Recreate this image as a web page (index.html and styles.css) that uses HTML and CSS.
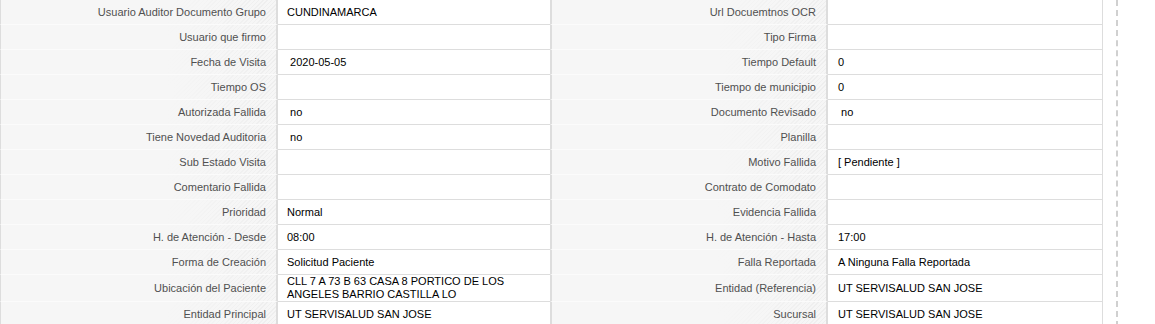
FILE: index.html
```html
<!DOCTYPE html>
<html lang="es">
  <head>
    <meta charset="utf-8" />
    <meta name="viewport" content="width=device-width, initial-scale=1.0" />
    <title>Detalle de Visita</title>
    <link rel="stylesheet" href="styles.css">
  </head>
  <body>
    <div class="page">
      <div class="visit-detail">
        <div class="lbl first">Usuario Auditor Documento Grupo</div>
        <div class="val">CUNDINAMARCA</div>
        <div class="lbl">Url Docuemtnos OCR</div>
        <div class="val last"></div>

        <div class="lbl first">Usuario que firmo</div>
        <div class="val"></div>
        <div class="lbl">Tipo Firma</div>
        <div class="val last"></div>

        <div class="lbl first">Fecha de Visita</div>
        <div class="val">&nbsp;2020-05-05</div>
        <div class="lbl">Tiempo Default</div>
        <div class="val last">0</div>

        <div class="lbl first">Tiempo OS</div>
        <div class="val"></div>
        <div class="lbl">Tiempo de municipio</div>
        <div class="val last">0</div>

        <div class="lbl first">Autorizada Fallida</div>
        <div class="val">&nbsp;no</div>
        <div class="lbl">Documento Revisado</div>
        <div class="val last">&nbsp;no</div>

        <div class="lbl first">Tiene Novedad Auditoria</div>
        <div class="val">&nbsp;no</div>
        <div class="lbl">Planilla</div>
        <div class="val last"></div>

        <div class="lbl first">Sub Estado Visita</div>
        <div class="val"></div>
        <div class="lbl">Motivo Fallida</div>
        <div class="val last">[ Pendiente ]</div>

        <div class="lbl first">Comentario Fallida</div>
        <div class="val"></div>
        <div class="lbl">Contrato de Comodato</div>
        <div class="val last"></div>

        <div class="lbl first">Prioridad</div>
        <div class="val">Normal</div>
        <div class="lbl">Evidencia Fallida</div>
        <div class="val last"></div>

        <div class="lbl first">H. de Atención - Desde</div>
        <div class="val">08:00</div>
        <div class="lbl">H. de Atención - Hasta</div>
        <div class="val last">17:00</div>

        <div class="lbl first">Forma de Creación</div>
        <div class="val">Solicitud Paciente</div>
        <div class="lbl">Falla Reportada</div>
        <div class="val last">A Ninguna Falla Reportada</div>

        <div class="lbl first">Ubicación del Paciente</div>
        <div class="val">CLL 7 A 73 B 63 CASA 8 PORTICO DE LOS ANGELES BARRIO CASTILLA LO</div>
        <div class="lbl">Entidad (Referencia)</div>
        <div class="val last">UT SERVISALUD SAN JOSE</div>

        <div class="lbl first">Entidad Principal</div>
        <div class="val">UT SERVISALUD SAN JOSE</div>
        <div class="lbl">Sucursal</div>
        <div class="val last">UT SERVISALUD SAN JOSE</div>
      </div>
      <div class="side-panel"></div>
    </div>
  </body>
</html>
```

FILE: styles.css
```css
body {
  margin: 0;
  background-color: white;
  font-family: "Liberation Sans", Arial, sans-serif;
  font-size: 11px;
}
.page {
  display: flex;
  align-items: stretch;
  min-height: 324px;
}
.visit-detail {
  display: grid;
  grid-template-columns: 278px 272px 278px 275px;
  align-content: start;
}
.lbl,
.val {
  display: flex;
  align-items: center;
  min-height: 24px;
  line-height: 13px;
}
.lbl {
  justify-content: flex-end;
  text-align: right;
  padding: 0 10px 0 6px;
  color: #505050;
  border-left: 2px solid #dddddd;
  border-right: 2px solid #dddddd;
  border-bottom: 1px solid #fbfbfb;
  background:
    linear-gradient(to right, #f6f6f6 60%, rgba(246, 246, 246, 0) 100%),
    repeating-linear-gradient(135deg, #f6f6f6 0 2px, #eeeeee 2px 3px);
}
.lbl.first {
  border-left-width: 1px;
}
.val {
  padding: 0 9px;
  color: #000;
  background-color: white;
  border-bottom: 1px solid #dddddd;
}
.val.last {
  padding-left: 10px;
  border-right: 1px solid #dddddd;
}
.side-panel {
  margin-left: 13px;
  border-left: 2px dashed #d0d0d0;
}
```
